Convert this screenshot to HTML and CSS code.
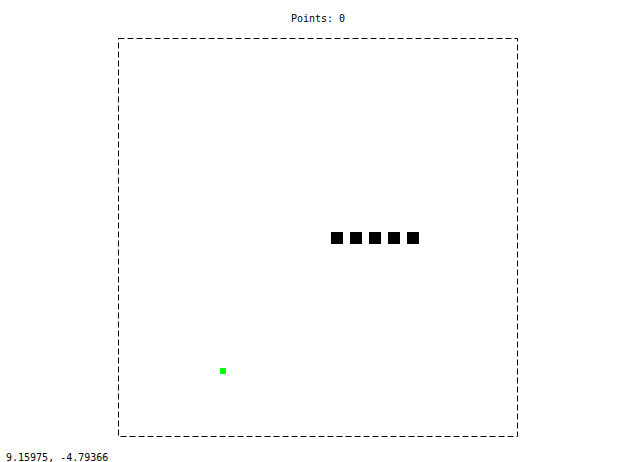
FILE: index.html
```html
<!DOCTYPE html>
<html>
<head>
<meta charset="utf-8">
<link rel="stylesheet" href="styles.css">
</head>
<body>
<div class="game">
  <div class="points">Points: 0</div>
  <svg class="board" width="400" height="399" viewBox="0 0 400 399">
    <rect x="0.5" y="0.5" width="399" height="398" fill="none" stroke="#000" stroke-width="1" stroke-dasharray="6 3"/>
    <rect x="213" y="194" width="12" height="12" fill="#000"/>
    <rect x="232" y="194" width="12" height="12" fill="#000"/>
    <rect x="251" y="194" width="12" height="12" fill="#000"/>
    <rect x="270" y="194" width="12" height="12" fill="#000"/>
    <rect x="289" y="194" width="12" height="12" fill="#000"/>
    <rect x="102" y="330" width="6" height="6" fill="#00ff00"/>
  </svg>
</div>
<div class="coords">9.15975, -4.79366</div>
</body>
</html>
```
FILE: styles.css
```css
html, body {
  margin: 0;
  padding: 0;
  background: #fff;
}
body {
  width: 640px;
  height: 462px;
  position: relative;
  overflow: hidden;
  font-family: "DejaVu Sans Mono", "Liberation Mono", monospace;
  font-size: 10px;
  color: #000;
}
.game {
  width: 400px;
  margin-left: 118px;
  padding-top: 13px;
  display: flex;
  flex-direction: column;
  align-items: center;
}
.points {
  line-height: 12px;
  height: 12px;
  margin-bottom: 13px;
}
.board {
  display: block;
}
.coords {
  padding-left: 6px;
  margin-top: 15px;
  line-height: 12px;
}
```
